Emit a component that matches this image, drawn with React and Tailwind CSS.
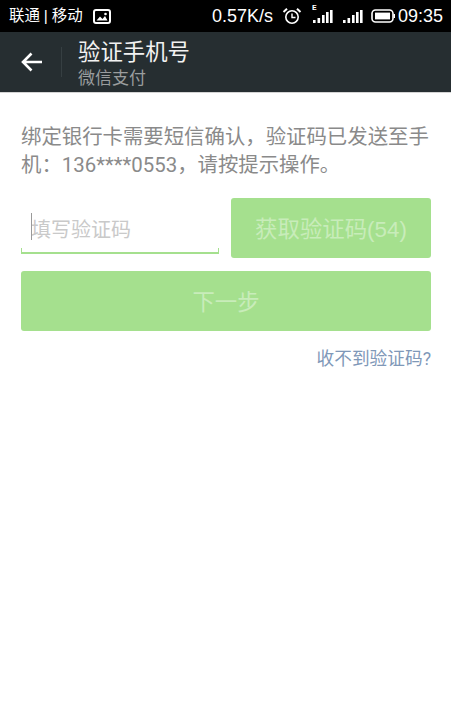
import React from 'react';

const cjk = "font-['Roboto','Noto_Sans_CJK_SC',sans-serif]";

const Signal = ({ label }) => (
    <div className="relative w-[21px] h-[16px]">
        {label && <span className="absolute left-0 top-[-5px] text-[8px] leading-[10px] font-bold text-white">E</span>}
        <svg width="21" height="16" viewBox="0 0 21 16" fill="#fff" className="absolute left-0 top-0">
            <rect x="1" y="12" width="2.6" height="3" />
            <rect x="5.5" y="10" width="2.6" height="5" />
            <rect x="10" y="7" width="2.6" height="8" />
            <rect x="14" y="4" width="2.6" height="11" />
            <rect x="18" y="2" width="2.6" height="13" />
        </svg>
    </div>
);

const StatusBar = () => (
    <div className="flex items-center justify-between h-[32px] bg-black text-white pl-[9px] pr-[8px]">
        <div className="flex items-center">
            <span className="text-[15.5px] leading-[32px] whitespace-pre">联通 <span className="font-['Liberation_Sans',sans-serif]">|</span> 移动</span>
            <svg width="18" height="15" viewBox="0 0 18 15" className="ml-[10px]" fill="none">
                <rect x="1" y="1" width="16" height="13" rx="2" stroke="#fff" strokeWidth="2" />
                <path d="M3.5 11.5 L7 7.5 L9.5 10 L12 7 L14.5 11.5 Z" fill="#fff" />
                <circle cx="12.5" cy="5" r="1.3" fill="#fff" />
            </svg>
        </div>
        <div className="flex items-center">
            <span className="text-[18px] leading-[32px] font-['Liberation_Sans',sans-serif]">0.57K/s</span>
            <svg width="20" height="18" viewBox="0 0 20 18" className="ml-[9px]" fill="none" stroke="#fff">
                <circle cx="10" cy="10" r="6.2" strokeWidth="1.6" />
                <path d="M10 6.5 V10.5 H13.5" strokeWidth="1.4" />
                <path d="M1.5 5 L5 1.8 M18.5 5 L15 1.8" strokeWidth="2" />
            </svg>
            <div className="ml-[10px]"><Signal label /></div>
            <div className="ml-[9px]"><Signal /></div>
            <svg width="24" height="14" viewBox="0 0 24 14" className="ml-[8px]" fill="none">
                <rect x="1" y="1" width="21" height="12" rx="3.5" stroke="#fff" strokeWidth="1.6" />
                <rect x="4" y="3.6" width="15" height="6.8" fill="#fff" />
                <rect x="22.5" y="5" width="1.5" height="4" fill="#fff" />
            </svg>
            <span className="ml-[3px] text-[18px] leading-[32px] font-['Liberation_Sans',sans-serif]">09:35</span>
        </div>
    </div>
);

const Header = () => (
    <div className="flex items-center h-[61px] bg-[#262e31] border-b border-[#d4d4d4]">
        <svg width="22" height="20" viewBox="0 0 22 20" className="ml-[21px]" fill="none" stroke="#fff" strokeWidth="2.6">
            <path d="M21 10 H2.5 M10.5 1.5 L2 10 L10.5 18.5" />
        </svg>
        <div className="ml-[18px] w-px h-[30px] bg-[#363f42]" />
        <div className="ml-[16px] flex flex-col pt-[3px]">
            <span className="text-[22.4px] leading-[28px] text-[#f2f2f2]">验证手机号</span>
            <span className="text-[17px] leading-[24px] text-[#9a9d9e]">微信支付</span>
        </div>
    </div>
);

export default function App() {
    return (
        <div className={`min-h-[724px] w-[451px] bg-white ${cjk}`}>
            <StatusBar />
            <Header />

            <div className="pl-[21px] pr-[20px]">
                <p className="mt-[30px] text-[20.4px] leading-[28px] text-[#8a8a8a]">
                    绑定银行卡需要短信确认，验证码已发送至手机：136****0553，请按提示操作。
                </p>

                <div className="mt-[19px] flex gap-[12px]">
                    {/* Code input */}
                    <div className="relative w-[198px] h-[56px] border-b-2 border-[#a5e08e] flex items-center">
                        <span className="absolute left-0 bottom-0 w-px h-[4px] bg-[#a5e08e]" />
                        <span className="absolute right-0 bottom-0 w-px h-[4px] bg-[#a5e08e]" />
                        <span className="absolute left-[10px] top-[15px] w-px h-[27px] bg-[#9a9a9a]" />
                        <span className="ml-[10px] text-[20px] text-[#c9c9c9] leading-[28px] mt-[9px]">填写验证码</span>
                    </div>
                    <button className="w-[200px] h-[60px] pt-[3px] rounded-[3px] bg-[#a5e08e] text-[22.4px] text-[#c8ecba] font-['Liberation_Sans','Noto_Sans_CJK_SC',sans-serif]">
                        获取验证码(54)
                    </button>
                </div>

                <button className="mt-[13px] w-full h-[60px] pt-[3px] rounded-[3px] bg-[#a5e08e] text-[22.4px] text-[#c8ecba]">
                    下一步
                </button>

                <div className="mt-[16px] text-right text-[17.7px] leading-[24px] text-[#7f98b8]">收不到验证码?</div>
            </div>
        </div>
    );
}
